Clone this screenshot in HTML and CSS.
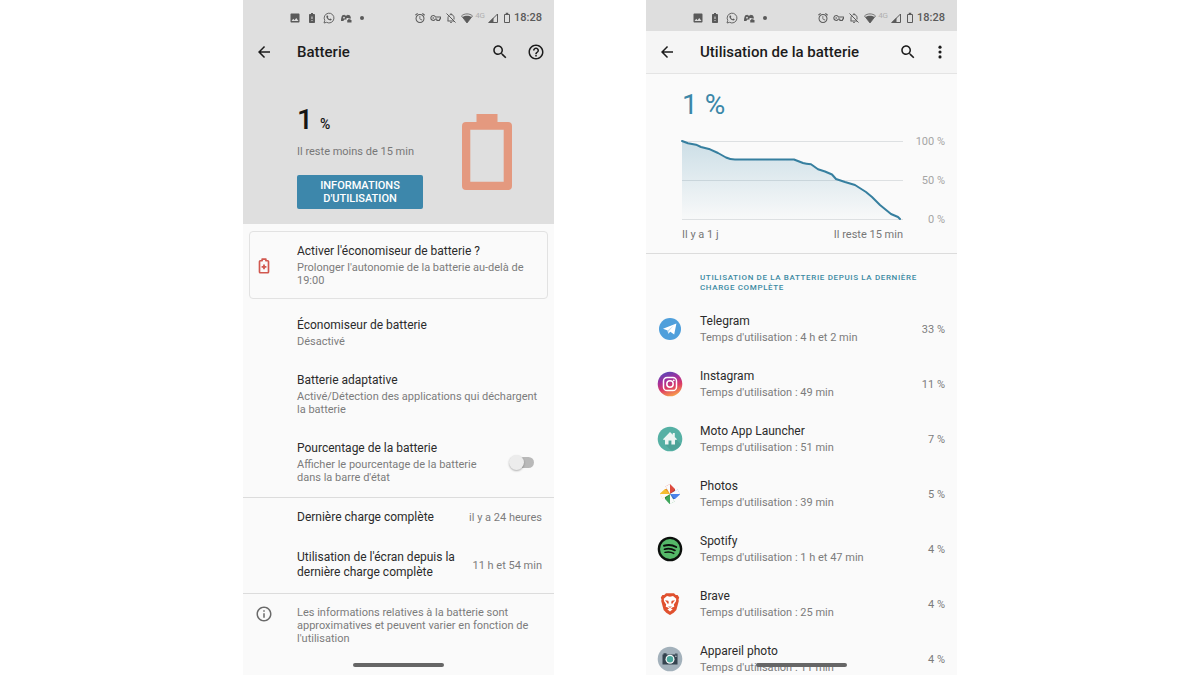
FILE: index.html
```html
<!DOCTYPE html>
<html lang="fr">
<head>
<meta charset="utf-8">
<meta name="viewport" content="width=device-width, initial-scale=1">
<title>Batterie</title>
<link rel="stylesheet" href="styles.css">
</head>
<body>
<svg class="sprite" aria-hidden="true">
  <symbol id="i-image" viewBox="0 0 24 24"><path d="M21 19V5c0-1.100-.9-2-2-2H5c-1.100 0-2 .9-2 2v14c0 1.100.9 2 2 2h14c1.100 0 2-.9 2-2zM8.500 13.500l2.500 3.010L14.500 12l4.500 6H5l3.500-4.500z"/></symbol>
  <symbol id="i-alert" viewBox="0 0 24 24"><path d="M16 4h-2V2h-4v2H8C7 4 6 4.800 6 5.800v14.700C6 21.400 7 22 8 22h8c1 0 2-.6 2-1.500V5.800C18 4.800 17 4 16 4zM13 18h-2v-2h2v2zm0-4h-2V9h2v5z"/></symbol>
  <symbol id="i-whatsapp" viewBox="0 0 24 24"><path d="M2 22l1.500-5.200A9.800 9.800 0 1 1 7.200 20.600z" fill="none" stroke="currentColor" stroke-width="1.800"/><path d="M8.600 6.800c-.8 0-1.800.9-1.800 2.400 0 3.600 4.600 7.900 8 7.900 1.500 0 2.600-1 2.600-2.400l-2.900-1.500-1.300 1.500c-1.700-.7-2.900-1.900-3.600-3.500l1.100-1.300-1.200-3.100z"/></symbol>
  <symbol id="i-game" viewBox="0 0 24 24"><path fill-rule="evenodd" d="M2 18c0-5 .8-9 2.800-11.500L9 5.500l1 1.500h4l1-1.500 4.200 1C20.700 8 21.500 10 22 13h-5v-1h-4v3H9l-2.500 3zM8 9.500a1.800 1.800 0 1 0 0 3.600 1.800 1.800 0 0 0 0-3.600z"/><path d="M14.500 16h1.500v-1.500h5V16h2v5h-8.500z"/></symbol>
  <symbol id="i-alarm" viewBox="0 0 24 24"><path d="M22 5.720l-4.600-3.860-1.290 1.530 4.600 3.860L22 5.720zM7.880 3.390L6.600 1.860 2 5.710l1.290 1.530 4.590-3.850zM12.500 8H11v6l4.750 2.850.75-1.230-4-2.370V8zM12 4c-4.970 0-9 4.030-9 9s4.020 9 9 9a9 9 0 1 0 0-18zm0 16c-3.870 0-7-3.130-7-7s3.130-7 7-7 7 3.130 7 7-3.130 7-7 7z"/></symbol>
  <symbol id="i-key" viewBox="0 0 24 24"><path d="M7 6.800a5.200 5.200 0 1 0 4.800 7.300H15v3.200h5.500v-3.200H23V9.900H11.800A5.200 5.200 0 0 0 7 6.800z" fill="none" stroke="currentColor" stroke-width="2.200" stroke-linejoin="round"/><circle cx="7" cy="12" r="1.800"/></symbol>
  <symbol id="i-belloff" viewBox="0 0 24 24"><path d="M12 22a2 2 0 0 0 2-2h-4a2 2 0 0 0 2 2z"/><path d="M3 3l18 18M6.700 8.500C6.200 9.500 6 10.500 6 11.500V17l-1 1h13M9 6c.9-.6 2-.9 3-.9 3.500 0 6 2.600 6 5.900v4M12 5V2.500" fill="none" stroke="currentColor" stroke-width="2"/></symbol>
  <symbol id="i-wifi" viewBox="0 0 24 24"><path d="M12 22L1 7.800C4 5.200 7.800 3.800 12 3.800S20 5.200 23 7.800z" fill="none" stroke="currentColor" stroke-width="1.600"/><path d="M12 22L3 10.500c2.500-1.900 5.700-2.900 9-2.900s6.500 1 9 2.900z"/></symbol>
  <symbol id="i-signal" viewBox="0 0 24 24"><path d="M4 21L21 4v17z" fill="none" stroke="currentColor" stroke-width="2"/><path d="M2 22L13 11v11z"/></symbol>
  <symbol id="i-batt" viewBox="0 0 16 24"><path d="M3 5h10v16H3z" fill="none" stroke="currentColor" stroke-width="2"/><path d="M5.500 1.500h5V5h-5z"/></symbol>
  <symbol id="i-back" viewBox="0 0 24 24"><path d="M20 11H7.830l5.590-5.590L12 4l-8 8 8 8 1.410-1.410L7.830 13H20v-2z"/></symbol>
  <symbol id="i-search" viewBox="0 0 24 24"><path d="M15.500 14h-.79l-.28-.27C15.410 12.590 16 11.110 16 9.500 16 5.910 13.090 3 9.500 3S3 5.910 3 9.500 5.910 16 9.500 16c1.610 0 3.090-.59 4.230-1.570l.27.28v.79l5 4.990L20.490 19l-4.990-5zm-6 0C7.010 14 5 11.990 5 9.500S7.010 5 9.500 5 14 7.010 14 9.500 11.990 14 9.500 14z"/></symbol>
</svg>

<main class="screens">
  <section class="phone">
    <div class="hero">
      <div class="status status-clear">
        <div class="status-left">
          <svg class="s-icon"><use href="#i-image"/></svg>
          <svg class="s-icon"><use href="#i-alert"/></svg>
          <svg class="s-icon"><use href="#i-whatsapp"/></svg>
          <svg class="s-icon"><use href="#i-game"/></svg>
          <span class="s-more"></span>
        </div>
        <div class="status-right">
          <svg class="s-icon"><use href="#i-alarm"/></svg>
          <svg class="s-icon s-key"><use href="#i-key"/></svg>
          <svg class="s-icon"><use href="#i-belloff"/></svg>
          <svg class="s-icon"><use href="#i-wifi"/></svg>
          <span class="s-net">4G</span>
          <svg class="s-icon"><use href="#i-signal"/></svg>
          <svg class="s-icon s-batt"><use href="#i-batt"/></svg>
          <span class="clock">18:28</span>
        </div>
      </div>
      <header class="toolbar">
        <button class="tool" aria-label="Retour"><svg><use href="#i-back"/></svg></button>
        <h1>Batterie</h1>
        <button class="tool" aria-label="Rechercher"><svg><use href="#i-search"/></svg></button>
        <button class="tool tool-help" aria-label="Aide"><svg viewBox="0 0 24 24"><path d="M11 18h2v-2h-2v2zm1-16C6.480 2 2 6.480 2 12s4.480 10 10 10 10-4.480 10-10S17.520 2 12 2zm0 18c-4.410 0-8-3.590-8-8s3.590-8 8-8 8 3.590 8 8-3.590 8-8 8zm0-14c-2.210 0-4 1.790-4 4h2c0-1.100.9-2 2-2s2 .9 2 2c0 2-3 1.750-3 5h2c0-2.250 3-2.500 3-5 0-2.210-1.790-4-4-4z"/></svg></button>
      </header>
      <div class="summary">
        <div class="summary-text">
          <p class="level">1 <small>%</small></p>
          <p class="remaining">Il reste moins de 15 min</p>
          <button class="usage-button">INFORMATIONS D'UTILISATION</button>
        </div>
        <svg class="big-battery" viewBox="0 0 50 76" aria-hidden="true"><path fill-rule="evenodd" d="M14.500 0h21v8H46a4 4 0 0 1 4 4v60a4 4 0 0 1-4 4H4a4 4 0 0 1-4-4V12a4 4 0 0 1 4-4h10.500zM8.300 15.700v52h33.400v-52z"/></svg>
      </div>
    </div>

    <div class="card">
      <svg class="lead" viewBox="0 0 24 24" aria-hidden="true"><path d="M6 6a1 1 0 0 1 1-1h2.500V2.800h5V5H17a1 1 0 0 1 1 1v14a1 1 0 0 1-1 1H7a1 1 0 0 1-1-1z" fill="none" stroke="currentColor" stroke-width="2.200" stroke-linejoin="round"/><path d="M10.800 10h2.400v2h2v2.400h-2v2h-2.400v-2h-2V12h2z"/></svg>
      <div class="text">
        <h2>Activer l'économiseur de batterie ?</h2>
        <p>Prolonger l'autonomie de la batterie au-delà de 19:00</p>
      </div>
    </div>

    <div class="row"><div class="text"><h2>Économiseur de batterie</h2><p>Désactivé</p></div></div>
    <div class="row"><div class="text"><h2>Batterie adaptative</h2><p>Activé/Détection des applications qui déchargent la batterie</p></div></div>
    <label class="row row-switch" for="percent">
      <span class="text"><span class="title">Pourcentage de la batterie</span><span class="sub">Afficher le pourcentage de la batterie dans la barre d'état</span></span>
      <input type="checkbox" id="percent" class="switch">
    </label>
    <div class="row ruled"><div class="text"><h2>Dernière charge complète</h2></div><span class="value">il y a 24 heures</span></div>
    <div class="row"><div class="text"><h2>Utilisation de l'écran depuis la dernière charge complète</h2></div><span class="value">11 h et 54 min</span></div>
    <div class="row note ruled">
      <svg class="lead" viewBox="0 0 24 24" aria-hidden="true"><path d="M11 7h2v2h-2zm0 4h2v6h-2zm1-9C6.480 2 2 6.480 2 12s4.480 10 10 10 10-4.480 10-10S17.520 2 12 2zm0 18c-4.410 0-8-3.590-8-8s3.590-8 8-8 8 3.590 8 8-3.590 8-8 8z"/></svg>
      <div class="text"><p>Les informations relatives à la batterie sont approximatives et peuvent varier en fonction de l'utilisation</p></div>
    </div>
    <span class="home-pill"></span>
  </section>

  <section class="phone">
    <div class="status">
      <div class="status-left">
        <svg class="s-icon"><use href="#i-image"/></svg>
        <svg class="s-icon"><use href="#i-alert"/></svg>
        <svg class="s-icon"><use href="#i-whatsapp"/></svg>
        <svg class="s-icon"><use href="#i-game"/></svg>
        <span class="s-more"></span>
      </div>
      <div class="status-right">
        <svg class="s-icon"><use href="#i-alarm"/></svg>
        <svg class="s-icon s-key"><use href="#i-key"/></svg>
        <svg class="s-icon"><use href="#i-belloff"/></svg>
        <svg class="s-icon"><use href="#i-wifi"/></svg>
        <span class="s-net">4G</span>
        <svg class="s-icon"><use href="#i-signal"/></svg>
        <svg class="s-icon s-batt"><use href="#i-batt"/></svg>
        <span class="clock">18:28</span>
      </div>
    </div>
    <header class="toolbar toolbar-raised">
      <button class="tool" aria-label="Retour"><svg><use href="#i-back"/></svg></button>
      <h1>Utilisation de la batterie</h1>
      <button class="tool" aria-label="Rechercher"><svg><use href="#i-search"/></svg></button>
      <button class="tool tool-more" aria-label="Plus d'options"><svg viewBox="0 0 24 24"><circle cx="12" cy="5.500" r="2.100"/><circle cx="12" cy="12" r="2.100"/><circle cx="12" cy="18.500" r="2.100"/></svg></button>
    </header>

    <div class="graph">
      <p class="graph-level">1 %</p>
      <div class="graph-body">
        <svg class="plot" viewBox="0 0 221 80" preserveAspectRatio="none" aria-hidden="true">
          <defs><linearGradient id="fade" x1="0" y1="0" x2="0" y2="1"><stop offset="0" stop-color="#3b87a8" stop-opacity=".24"/><stop offset="1" stop-color="#3b87a8" stop-opacity=".01"/></linearGradient></defs>
          <path class="grid-line" d="M0 1.500H221M0 40.500H221M0 79.500H221"/>
          <path fill="url(#fade)" d="M0 1L6 3.300 14 4.700 19 7 28 9.300 36 13 44 17.500Q48 19.500 53 19.500H112L121 23 129 24.300 136 29.300 143 31.500 150 34.500 154 39 163 42 173 45 184 52 190 57 198 65 209 74 216 77 218 79H0z"/>
          <path class="curve" d="M0 1L6 3.300 14 4.700 19 7 28 9.300 36 13 44 17.500Q48 19.500 53 19.500H112L121 23Q124 24 129 24.300L136 29.300 143 31.500 150 34.500 154 39 163 42 173 45 184 52 190 57 198 65 209 74 216 77 218 79"/>
        </svg>
        <div class="scale"><span>100 %</span><span>50 %</span><span>0 %</span></div>
        <div class="range"><span>Il y a 1 j</span><span>Il reste 15 min</span></div>
      </div>
    </div>

    <h2 class="section-title">UTILISATION DE LA BATTERIE DEPUIS LA DERNIÈRE CHARGE COMPLÈTE</h2>

    <div class="row app">
      <svg class="app-icon" viewBox="0 0 26 26" aria-hidden="true"><circle cx="13" cy="13" r="11" fill="#4f9fdb"/><path d="M6 12.700L19.400 7.400 17.200 18.600 13.300 15.800 11.200 17.800 10.600 14.400z" fill="#fff"/><path d="M10.600 14.400L17 9.300 11.900 14.900 11.200 17.800z" fill="#b9d9ef"/></svg>
      <div class="text"><h2>Telegram</h2><p>Temps d'utilisation : 4 h et 2 min</p></div><span class="value">33 %</span>
    </div>
    <div class="row app">
      <svg class="app-icon" viewBox="0 0 26 26" aria-hidden="true"><defs><linearGradient id="ig" x1=".25" y1="0" x2=".6" y2="1"><stop offset="0" stop-color="#5448b8"/><stop offset=".35" stop-color="#a4309c"/><stop offset=".65" stop-color="#dc3b64"/><stop offset="1" stop-color="#f8a04c"/></linearGradient></defs><circle cx="13" cy="13" r="12.300" fill="url(#ig)"/><rect x="6.500" y="6.500" width="13" height="13" rx="3.600" fill="none" stroke="#fff" stroke-width="1.500"/><circle cx="13" cy="13" r="3.200" fill="none" stroke="#fff" stroke-width="1.500"/><circle cx="16.800" cy="9.300" r=".9" fill="#fff"/></svg>
      <div class="text"><h2>Instagram</h2><p>Temps d'utilisation : 49 min</p></div><span class="value">11 %</span>
    </div>
    <div class="row app">
      <svg class="app-icon" viewBox="0 0 26 26" aria-hidden="true"><circle cx="13" cy="13" r="12.300" fill="#55b0a4"/><path d="M8 18.500l6 5.800A12.300 12.300 0 0 0 24 18.500L18 12z" fill="#4da398"/><path d="M6 13.200L13 6l2.800 2.800V7h2v3.900l2.200 2.300-1.100 1-.9-.8v5.200h-3.600v-4h-2.900v4H8v-5.200l-.9.8z" fill="#edf5f3"/></svg>
      <div class="text"><h2>Moto App Launcher</h2><p>Temps d'utilisation : 51 min</p></div><span class="value">7 %</span>
    </div>
    <div class="row app">
      <svg class="app-icon" viewBox="0 0 26 26" aria-hidden="true"><path d="M13 13L8.500 5.500 13 3l5 5v5z" fill="#dd4b3e"/><path d="M13 13l5-5v5z" fill="#b83a30"/><path d="M13 13l7.500-4.500L23 13.500l-5 4.500h-5z" fill="#4a83ea"/><path d="M13 13l5 5h-5z" fill="#3367c9"/><path d="M13 13l4.500 7.500L12.500 23 8 18v-5z" fill="#3fa65b"/><path d="M13 13l-5 5v-5z" fill="#2c8145"/><path d="M13 13l-7.500 4.500L3 12.500 8 8h5z" fill="#f5bd2f"/><path d="M13 13L8 8h5z" fill="#e28f2b"/><path d="M13 13V3l-4.500 2.500zM13 13h10l-2.500-4.500zM13 13v10l4.500-2.500zM13 13H3l2.500 4.500z" fill="#fafafa"/></svg>
      <div class="text"><h2>Photos</h2><p>Temps d'utilisation : 39 min</p></div><span class="value">5 %</span>
    </div>
    <div class="row app">
      <svg class="app-icon" viewBox="0 0 26 26" aria-hidden="true"><circle cx="13" cy="13" r="12.300" fill="#0b0f0c"/><circle cx="13" cy="13" r="10" fill="#54b868"/><g fill="none" stroke="#0b0f0c" stroke-linecap="round"><path d="M7 9.800c4-1.200 8.600-.8 12.200 1.200" stroke-width="2"/><path d="M7.500 13.200c3.500-1 7.400-.6 10.500 1.200" stroke-width="1.700"/><path d="M8 16.400c3-.8 6.200-.5 8.800 1" stroke-width="1.400"/></g></svg>
      <div class="text"><h2>Spotify</h2><p>Temps d'utilisation : 1 h et 47 min</p></div><span class="value">4 %</span>
    </div>
    <div class="row app">
      <svg class="app-icon" viewBox="0 0 26 26" aria-hidden="true"><path d="M9 2.300h8l1.800 1.800 1.800-.1 1.600 2.500-.7 2 .3 1.500-2.300 8.400c-.5 1.600-4 4.200-6.500 5.600-2.500-1.400-6-4-6.500-5.600L4.200 10l.3-1.500-.7-2L5.400 4l1.800.1z" fill="#e0512f"/><path d="M10 5l3 .8L16 5l3.200 2.700-.2 2.500-2.200 3.300.5 2.300-2.200.7L13 18.600l-2.100-2.100-2.200-.7.500-2.300L7 10.200l-.2-2.500z" fill="#fff"/><path d="M8 9.200l3.300.6.500 1.800-.7 1.700L9.500 11zM18 9.200l-3.300.6-.5 1.800.7 1.700L16.500 11zM11 15l2 .8 2-.8-2 2z" fill="#e0512f"/><path d="M10.300 18.300l2.700-1 2.700 1L13 20.500z" fill="#fff"/></svg>
      <div class="text"><h2>Brave</h2><p>Temps d'utilisation : 25 min</p></div><span class="value">4 %</span>
    </div>
    <div class="row app">
      <svg class="app-icon" viewBox="0 0 26 26" aria-hidden="true"><circle cx="13" cy="13" r="12.300" fill="#a3b1bb"/><path d="M5.500 8.500h1V7.300h3v1.200h11v10h-15z" fill="#35434f"/><path d="M18 7.600h2.500v1H18z" fill="#35434f"/><circle cx="13" cy="13.200" r="4.500" fill="#f3f7f7"/><circle cx="13" cy="13.200" r="3.200" fill="#4aa79d"/><circle cx="18.900" cy="10.200" r=".7" fill="#c9d3d8"/></svg>
      <div class="text"><h2>Appareil photo</h2><p>Temps d'utilisation : 11 min</p></div><span class="value">4 %</span>
    </div>
    <span class="home-pill"></span>
  </section>
</main>
</body>
</html>
```
FILE: styles.css
```css
* { box-sizing: border-box; }
body {
  margin: 0;
  background: #fff;
  color: #2b2b2b;
  font: 12px/15px Roboto, "Noto Sans", sans-serif;
}
h1, h2, p { margin: 0; font-weight: 400; }
h2, .title { font-size: 12px; line-height: 15px; }
button { border: 0; padding: 0; font-family: inherit; color: inherit; background: none; cursor: pointer; }
svg { display: block; fill: currentColor; }
.sprite { position: absolute; width: 0; height: 0; }

.screens {
  display: grid;
  grid-template-columns: 1fr 1fr;
  gap: 92px;
  width: 59.5%;
  min-width: 660px;
  margin: 0 auto;
}
.phone {
  position: relative;
  height: 100vh;
  min-width: 0;
  overflow: hidden;
  background: #fafafa;
}
.home-pill {
  position: absolute;
  bottom: 8px;
  left: 50%;
  width: 91px;
  height: 4px;
  margin-left: -46px;
  border-radius: 2px;
  background: #666;
}

/* Status bar */
.status {
  display: flex;
  justify-content: space-between;
  align-items: center;
  height: 31px;
  padding: 5px 12px 0 46px;
  background: #dedede;
  color: #5a5a5a;
}
.status-clear { background: none; }
.status-left { display: flex; align-items: center; gap: 5px; }
.status-right { display: flex; align-items: center; gap: 4px; }
.s-icon { width: 12px; height: 12px; }
.s-key { width: 11px; }
.s-batt { width: 8px; margin-right: -1px; }
.s-more { width: 4px; height: 4px; margin-left: 3px; border-radius: 50%; background: #5a5a5a; }
.s-net { margin: 0 -2px; padding-bottom: 4px; font-size: 8px; line-height: 12px; color: #b0b0b0; }
.clock { font-size: 11px; line-height: 12px; font-weight: 500; }

/* Toolbar */
.toolbar {
  display: flex;
  align-items: center;
  height: 43px;
  padding: 0 9px 0 12px;
  border-bottom: 1px solid transparent;
  color: #1c1c1c;
}
.toolbar-raised { background: #f5f5f5; border-color: #e4e4e4; }
.toolbar h1 { flex: 1; padding-left: 24px; font-size: 15px; line-height: 20px; font-weight: 500; }
.tool svg { width: 18px; height: 18px; }
.tool-help { margin-left: 18px; }
.tool-more { margin-left: 14px; margin-right: -1px; }

/* Battery summary */
.hero { background: #dfdfdf; }
.summary { display: flex; justify-content: space-between; padding: 30px 42px 15px 54px; }
.level { font-size: 28px; line-height: 32px; font-weight: 500; color: #151515; }
.level small { font-size: 14px; }
.remaining { margin-top: 5px; font-size: 11px; line-height: 13px; color: #777; }
.usage-button {
  width: 126px;
  margin-top: 17px;
  padding: 4px 16px;
  border-radius: 2px;
  background: #3d87ab;
  color: #fff;
  font-size: 11px;
  line-height: 13px;
  font-weight: 500;
}
.big-battery { width: 50px; height: 76px; margin-top: 10px; color: #e4997f; }

/* Rows */
.row { display: flex; align-items: center; padding: 12px 12px 13px 54px; }
.text { flex: 1; min-width: 0; }
.text p, .sub { margin-top: 2px; font-size: 11px; line-height: 13px; color: #7c7c7c; }
.title, .sub { display: block; }
.value { margin-left: 12px; font-size: 11px; line-height: 13px; color: #7c7c7c; white-space: nowrap; }
.ruled { border-top: 1px solid #dcdcdc; }
.lead { flex: none; width: 18px; height: 18px; }
.card {
  display: flex;
  align-items: center;
  gap: 24px;
  margin: 7px 6px;
  padding: 12px 20px 11px 5px;
  border: 1px solid #e2e2e2;
  border-radius: 4px;
}
.card .lead { color: #d1584f; }
.note { align-items: flex-start; gap: 24px; padding-left: 12px; color: #6a6a6a; }
.note .lead { margin-top: -1px; }
.note .text p { margin-top: 0; }
.row-switch { padding-right: 20px; }
.row-switch .text { padding-right: 30px; }
.switch {
  appearance: none;
  position: relative;
  flex: none;
  width: 24px;
  height: 11px;
  margin: 0;
  border-radius: 6px;
  background: #b9b9b9;
}
.switch::before {
  content: "";
  position: absolute;
  top: -2px;
  left: -1px;
  width: 15px;
  height: 15px;
  border-radius: 50%;
  background: #ececec;
  box-shadow: 0 1px 2px rgba(0, 0, 0, .3);
}
.switch:checked::before { left: 10px; }

/* Battery graph */
.graph { padding: 15px 12px 12px 36px; border-bottom: 1px solid #dcdcdc; }
.graph-level { font-size: 28px; line-height: 32px; color: #3b87a8; }
.graph-body { display: grid; grid-template-columns: 1fr 42px; margin-top: 19px; }
.plot { width: 100%; height: 80px; overflow: visible; }
.grid-line { fill: none; stroke: #dde0e2; stroke-width: 1; }
.curve { fill: none; stroke: #367f9f; stroke-width: 2; stroke-linecap: round; stroke-linejoin: round; vector-effect: non-scaling-stroke; }
.scale {
  display: flex;
  flex-direction: column;
  justify-content: space-between;
  align-items: flex-end;
  height: 90px;
  margin-top: -4px;
  font-size: 11px;
  line-height: 12px;
  color: #a5a5a5;
}
.range { display: flex; justify-content: space-between; margin-top: 2px; font-size: 11px; line-height: 13px; color: #777; }

.section-title {
  margin: 19px 12px 9px 54px;
  font-size: 8px;
  line-height: 10px;
  font-weight: 500;
  letter-spacing: .08em;
  color: #3b8aa3;
}
.app { padding-left: 11px; }
.app-icon { flex: none; width: 26px; height: 26px; margin-right: 17px; }
```
